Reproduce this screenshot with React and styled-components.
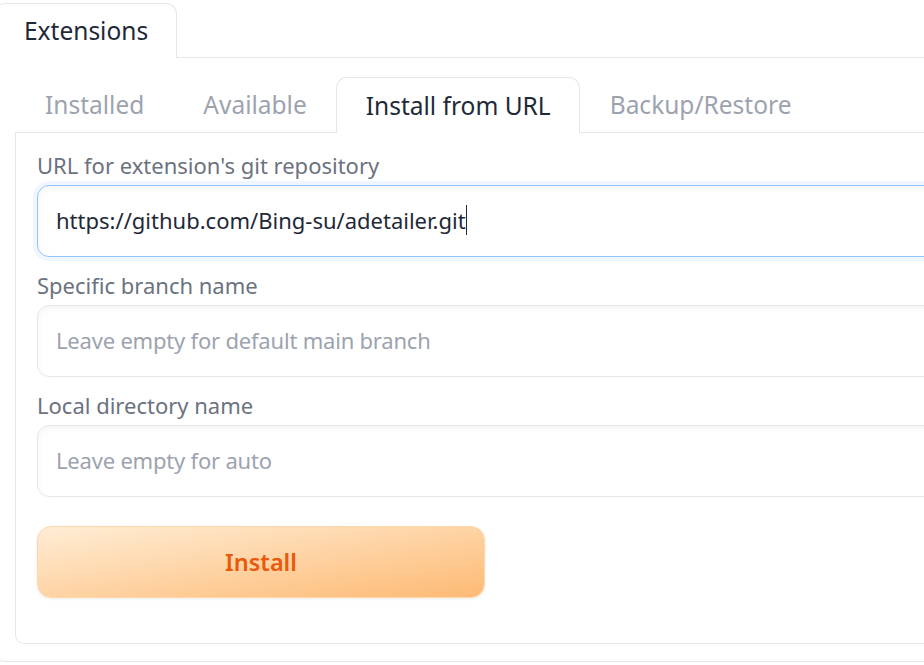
import React from "react";
import styled, { createGlobalStyle } from "styled-components";

const GlobalStyle = createGlobalStyle`
  html, body {
    margin: 0;
    padding: 0;
    background: #ffffff;
    overflow: hidden;
  }
  body {
    font-family: "Noto Sans", "Open Sans", sans-serif;
    color: #1f2937;
  }
`;

const Page = styled.div`
  width: 1000px;
  margin-left: -6px;
  padding-top: 3px;
`;

const TabBar = styled.div`
  display: flex;
  align-items: flex-end;
  border-bottom: 1px solid #e5e7eb;
`;

const Tab = styled.div`
  height: ${(p) => (p.$outer ? "53px" : "54px")};
  display: flex;
  align-items: center;
  padding: 0 28px 1px 29px;
  font-size: 24.5px;
  border: 1px solid ${(p) => (p.$active ? "#e5e7eb" : "transparent")};
  border-bottom: none;
  border-radius: 11px 11px 0 0;
  background: ${(p) => (p.$active ? "#ffffff" : "transparent")};
  color: ${(p) => (p.$active ? "#1f2937" : "#9ca3af")};
  margin-bottom: ${(p) => (p.$active ? "-1px" : "0")};
  white-space: nowrap;
`;

const OuterPanel = styled.div`
  border: 1px solid #e5e7eb;
  border-top: none;
  border-radius: 0 0 12px 12px;
  padding: 18px 0 17px 20px;
`;

const InnerPanel = styled.div`
  border: 1px solid #e5e7eb;
  border-top: none;
  border-radius: 0 0 9px 9px;
  padding: 18px 0 45px 21px;
  display: flex;
  flex-direction: column;
`;

const Block = styled.div`
  display: flex;
  flex-direction: column;
  margin-bottom: 14px;
`;

const Label = styled.label`
  font-size: 22px;
  line-height: 28px;
  color: #6b7280;
  margin-bottom: 6px;
`;

const Field = styled.div`
  height: 67px;
  display: flex;
  align-items: center;
  padding: 0 0 3px 18px;
  font-size: 22px;
  letter-spacing: ${(p) => (p.$placeholder ? "-0.2px" : "0")};
  border: 1px solid ${(p) => (p.$focused ? "#93c5fd" : "#e5e7eb")};
  border-radius: 12px;
  background: #ffffff;
  color: ${(p) => (p.$placeholder ? "#9ca3af" : "#1f2937")};
  box-shadow: ${(p) =>
    p.$focused
      ? "0 0 0 4px #eff6ff, inset 0 3px 6px rgba(0, 0, 0, 0.045)"
      : "inset 0 3px 6px rgba(0, 0, 0, 0.045)"};
  white-space: nowrap;
`;

const Caret = styled.span`
  display: inline-block;
  width: 1.5px;
  height: 30px;
  background: #1f2937;
`;

const InstallButton = styled.button`
  margin-top: 15px;
  width: 448px;
  height: 72px;
  border: 1px solid #fed7aa;
  border-radius: 14px;
  background: linear-gradient(to bottom right, #ffedd5, #fdba74);
  box-shadow: 0 1px 3px rgba(0, 0, 0, 0.08);
  color: #ea580c;
  font-family: "Noto Sans", "Open Sans", sans-serif;
  font-size: 23.5px;
  font-weight: 600;
  cursor: pointer;
`;

function TextBox({ label, value, placeholder, focused }) {
  return (
    <Block>
      <Label>{label}</Label>
      <Field $focused={focused} $placeholder={!value}>
        {value || placeholder}
        {focused && <Caret />}
      </Field>
    </Block>
  );
}

export default function App() {
  return (
    <>
      <GlobalStyle />
      <Page>
        <TabBar>
          <Tab $active $outer>
            Extensions
          </Tab>
        </TabBar>
        <OuterPanel>
          <TabBar>
            <Tab>Installed</Tab>
            <Tab>Available</Tab>
            <Tab $active>Install from URL</Tab>
            <Tab>Backup/Restore</Tab>
          </TabBar>
          <InnerPanel>
            <TextBox
              label="URL for extension's git repository"
              value="https://github.com/Bing-su/adetailer.git"
              focused
            />
            <TextBox
              label="Specific branch name"
              placeholder="Leave empty for default main branch"
            />
            <TextBox
              label="Local directory name"
              placeholder="Leave empty for auto"
            />
            <InstallButton>Install</InstallButton>
          </InnerPanel>
        </OuterPanel>
      </Page>
    </>
  );
}
